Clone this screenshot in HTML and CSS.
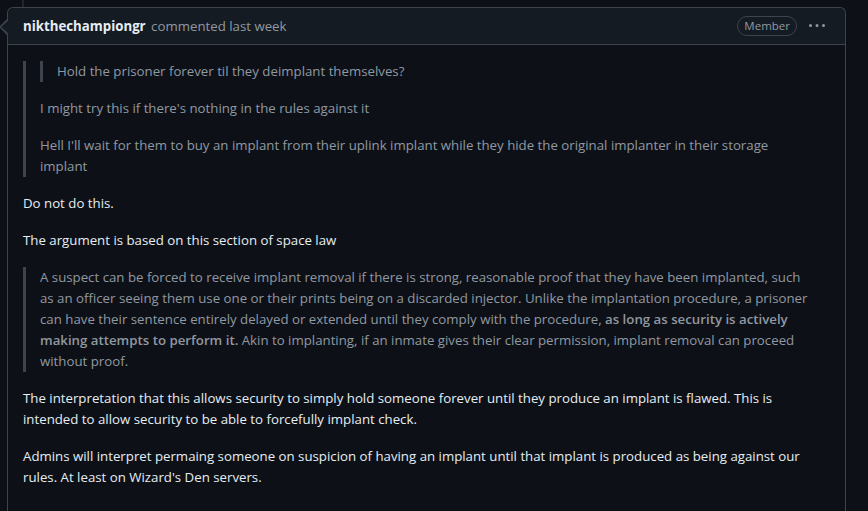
FILE: index.html
```html
<!DOCTYPE html>
<html>
	<head>
		<meta charset="utf-8">
		<title>Comment</title>
		<link rel="stylesheet" href="styles.css">
	</head>
	<body>
		<div class="timeline-line"></div>
		<div class="comment">
			<div class="comment-header">
				<div class="comment-meta">
					<a class="author" href="javascript:;">nikthechampiongr</a>
					<span class="muted">commented last week</span>
				</div>
				<div class="comment-actions">
					<span class="badge">Member</span>
					<button class="kebab" type="button" aria-label="More">
						<svg width="16" height="16" viewBox="0 0 16 16" fill="currentColor">
							<path d="M8 9a1.5 1.5 0 1 0 0-3 1.5 1.5 0 0 0 0 3ZM1.5 9a1.5 1.5 0 1 0 0-3 1.5 1.5 0 0 0 0 3Zm13 0a1.5 1.5 0 1 0 0-3 1.5 1.5 0 0 0 0 3Z"></path>
						</svg>
					</button>
				</div>
			</div>
			<div class="comment-body">
				<blockquote>
					<blockquote>
						<p>Hold the prisoner forever til they deimplant themselves?</p>
					</blockquote>
					<p>I might try this if there's nothing in the rules against it</p>
					<p>Hell I'll wait for them to buy an implant from their uplink implant while they hide the original implanter in their storage implant</p>
				</blockquote>
				<p>Do not do this.</p>
				<p>The argument is based on this section of space law</p>
				<blockquote>
					<p>A suspect can be forced to receive implant removal if there is strong, reasonable proof that they have been implanted, such as an officer seeing them use one or their prints being on a discarded injector. Unlike the implantation procedure, a prisoner can have their sentence entirely delayed or extended until they comply with the procedure, <strong>as long as security is actively making attempts to perform it.</strong> Akin to implanting, if an inmate gives their clear permission, implant removal can proceed without proof.</p>
				</blockquote>
				<p>The interpretation that this allows security to simply hold someone forever until they produce an implant is flawed. This is intended to allow security to be able to forcefully implant check.</p>
				<p>Admins will interpret permaing someone on suspicion of having an implant until that implant is produced as being against our rules. At least on Wizard's Den servers.</p>
			</div>
		</div>
	</body>
</html>
```
FILE: styles.css
```css
body {
	margin: 0;
	background: #0d1117;
	color: #e6edf3;
	font: 13.25px/21px "Open Sans", "Noto Sans", sans-serif;
}
.timeline-line {
	height: 7px;
	margin-left: 22px;
	width: 0;
	border-left: 2px solid #21262d;
}
.comment {
	margin: 0 22px 0 7px;
	border: 1px solid #3d444d;
	border-bottom: none;
	border-radius: 6px 6px 0 0;
}
.comment-header {
	position: relative;
	display: flex;
	align-items: center;
	justify-content: space-between;
	height: 36px;
	padding: 0 20px 0 15px;
	background: #151b23;
	border-bottom: 1px solid #3d444d;
	border-radius: 6px 6px 0 0;
}
.comment-header::before,
.comment-header::after {
	content: "";
	position: absolute;
	top: 11px;
	width: 8px;
	height: 16px;
	clip-path: polygon(0 50%, 100% 0, 100% 100%);
}
.comment-header::before {
	left: -9px;
	background: #3d444d;
}
.comment-header::after {
	left: -7px;
	top: 12px;
	height: 14px;
	background: #151b23;
}
.comment-meta {
	padding-top: 1px;
}
.author {
	color: #e6edf3;
	font-weight: 700;
	text-decoration: none;
}
.muted {
	color: #9198a1;
	margin-left: 2px;
}
.comment-actions {
	display: flex;
	align-items: center;
	gap: 12px;
}
.badge {
	padding: 0 6px;
	font-size: 11.5px;
	line-height: 18px;
	color: #9198a1;
	border: 1px solid #3d444d;
	border-radius: 20px;
}
.kebab {
	display: flex;
	padding: 0;
	border: none;
	background: none;
	color: #9198a1;
}
.comment-body {
	padding: 17px 15px 20px;
}
.comment-body p {
	margin: 0 0 16px;
}
.comment-body > blockquote:first-child {
	margin-top: -1px;
}
blockquote {
	margin: 0 0 16px;
	padding: 0 14px;
	color: #9198a1;
	border-left: 3px solid #3d444d;
}
blockquote p:last-child {
	margin-bottom: 0;
}
blockquote strong {
	font-weight: 600;
}
```
